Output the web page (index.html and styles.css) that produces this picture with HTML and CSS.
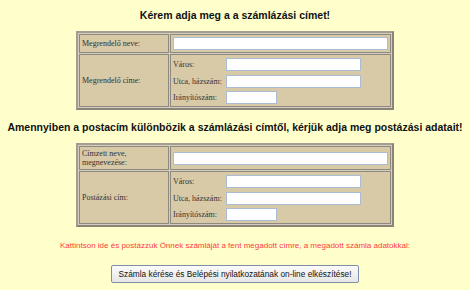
FILE: index.html
```html
<!DOCTYPE html>
<html lang="hu">
<head>
  <meta charset="UTF-8">
  <title>Számlázási cím</title>
  <link rel="stylesheet" href="styles.css">
</head>
<body>
  <div class="page">
    <h2>Kérem adja meg a a számlázási címet!</h2>
    <table class="form-table">
      <tr>
        <td class="label">Megrendelő neve:</td>
        <td class="field"><input type="text" class="wide"></td>
      </tr>
      <tr>
        <td class="label">Megrendelő címe:</td>
        <td class="field">
          <div class="address">
            <span>Város:</span><input type="text" class="mid">
            <span>Utca, házszám:</span><input type="text" class="mid">
            <span>Irányítószám:</span><input type="text" class="short">
          </div>
        </td>
      </tr>
    </table>

    <h2>Amennyiben a postacím különbözik a számlázási címtől, kérjük adja meg postázási adatait!</h2>
    <table class="form-table">
      <tr>
        <td class="label">Címzett neve,<br>megnevezése:</td>
        <td class="field"><input type="text" class="wide"></td>
      </tr>
      <tr>
        <td class="label">Postázási cím:</td>
        <td class="field">
          <div class="address">
            <span>Város:</span><input type="text" class="mid">
            <span>Utca, házszám:</span><input type="text" class="mid">
            <span>Irányítószám:</span><input type="text" class="short">
          </div>
        </td>
      </tr>
    </table>

    <p class="notice">Kattintson ide és postázzuk Önnek számláját a fent megadott címre, a megadott számla adatokkal:</p>
    <button type="button">Számla kérése és Belépési nyilatkozatának on-line elkészítése!</button>
  </div>
</body>
</html>
```

FILE: styles.css
```css
html, body {
  margin: 0;
  padding: 0;
  background-color: #ffffcc;
}
.page {
  display: flex;
  flex-direction: column;
  align-items: center;
  font-family: "Liberation Sans", Arial, sans-serif;
  padding-top: 9px;
}
h2 {
  margin: 0;
  font-size: 10.5px;
  font-weight: bold;
  color: #111;
  line-height: 13px;
  white-space: nowrap;
}
.form-table {
  width: 318px;
  margin: 9px 0 11px;
  border: 2px solid #a39c90;
  border-right-color: #8a8478;
  border-bottom-color: #8a8478;
  border-spacing: 1px;
  background-color: #d4cdbd;
}
.form-table td {
  background-color: #d8c9a7;
  border: 1px solid #8f8a80;
  font-family: "Liberation Serif", "Times New Roman", serif;
  font-size: 8px;
  color: #333;
  padding: 2px;
}
.form-table td.label {
  width: 88px;
  line-height: 9px;
}
.address {
  display: grid;
  grid-template-columns: 53px auto;
  row-gap: 3.5px;
  align-items: center;
  padding: 1px 0 0;
}
input {
  box-sizing: border-box;
  height: 13px;
  border: 1px solid #a9bcd4;
  background: #fff;
  padding: 0;
  margin: 0;
  display: block;
}
input.wide { width: 215px; }
input.mid { width: 135px; }
input.short { width: 51px; }
.notice {
  margin: 3px 0 14px;
  font-size: 8px;
  line-height: 10px;
  color: #ff3b3b;
}
button {
  font-family: "Liberation Sans", Arial, sans-serif;
  font-size: 8.3px;
  color: #111;
  height: 18px;
  padding: 0 7px;
  border: 1px solid #7e8fa6;
  border-radius: 2px;
  background: linear-gradient(#fbfbfb, #e6e6e6);
}
```
